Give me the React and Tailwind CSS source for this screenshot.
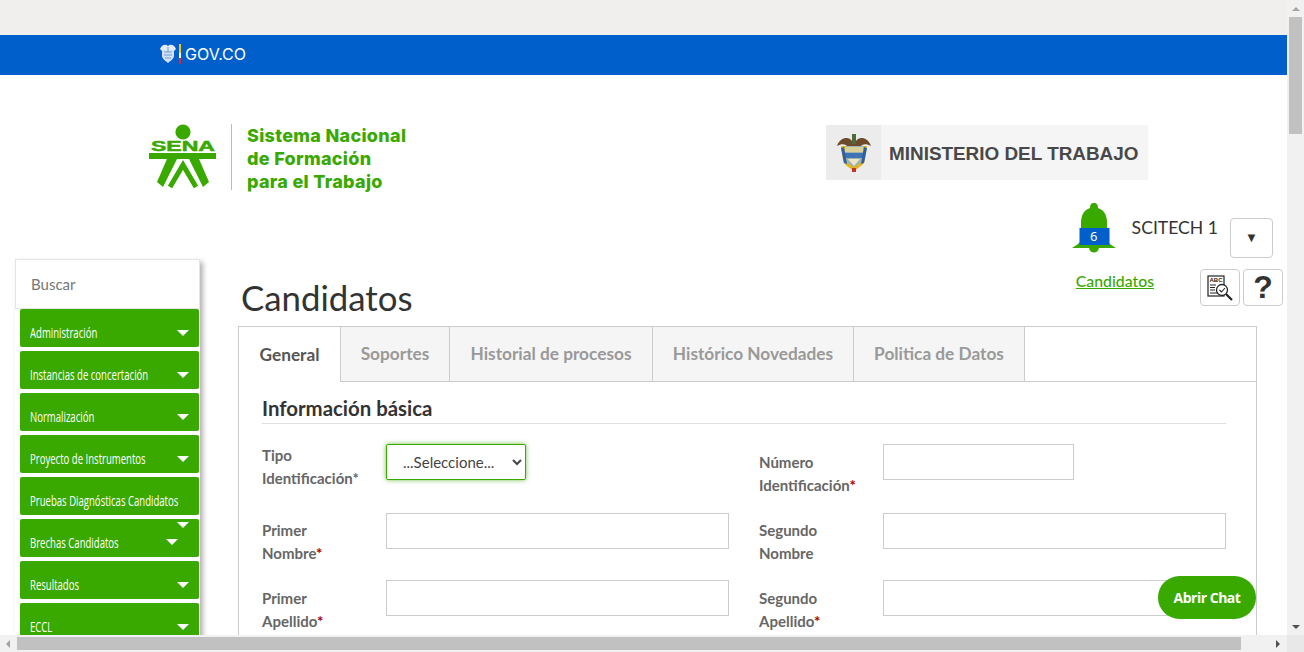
const menu = [
  { label: 'Administración', caret: true },
  { label: 'Instancias de concertación', caret: true },
  { label: 'Normalización', caret: true },
  { label: 'Proyecto de Instrumentos', caret: true },
  { label: 'Pruebas Diagnósticas Candidatos', caret: false },
  { label: 'Brechas Candidatos', caret: true, double: true },
  { label: 'Resultados', caret: true },
  { label: 'ECCL', caret: true },
]

const tabs = [
  { label: 'Soportes', w: 'w-[109px]' },
  { label: 'Historial de procesos', w: 'w-[203px]' },
  { label: 'Histórico Novedades', w: 'w-[201px]' },
  { label: 'Politica de Datos', w: 'w-[172px]' },
]

function Caret() {
  return <span className="block w-0 h-0 border-x-[6px] border-t-[6px] border-x-transparent border-t-white" />
}

function SenaLogo() {
  return (
    <svg width="68" height="66" viewBox="0 0 68 66" className="shrink-0">
      <circle cx="34" cy="8" r="7.6" fill="#39a900" />
      <text x="2" y="27" textLength="64" lengthAdjust="spacingAndGlyphs" fontFamily="Liberation Sans" fontWeight="700" fontSize="14" stroke="#39a900" strokeWidth="0.5" fill="#39a900">SENA</text>
      <rect x="0" y="29" width="67" height="6" fill="#39a900" />
      <polygon points="18,35 28,35 14,63 8,58" fill="#39a900" />
      <polygon points="40,35 50,35 60,58 54,63" fill="#39a900" />
      <path d="M21 63 L34 41 L47 63" fill="none" stroke="#39a900" strokeWidth="5" />
    </svg>
  )
}

function GovShield() {
  return (
    <svg width="16" height="19" viewBox="0 0 16 19" className="shrink-0">
      <path d="M0 5 C2 0 6 0 8 2 C10 0 14 0 16 5 L14 7 L2 7 Z" fill="#e3ebf6" />
      <path d="M2 6 H14 V12 C14 15 10 17 8 19 C6 17 2 15 2 12 Z" fill="#d5e1f1" />
      <path d="M4 8 H12 M4 11 H12 M5 14 H11" stroke="#6d9ddb" strokeWidth="1" />
      <path d="M8 3 V8" stroke="#6d9ddb" strokeWidth="1" />
    </svg>
  )
}

function ColombiaCrest() {
  return (
    <svg width="36" height="40" viewBox="0 0 36 40">
      <path d="M1 13 C4 4 13 3 16 8 L20 8 C23 3 32 4 35 13 C30 10 26 11 24 14 L12 14 C10 11 6 10 1 13 Z" fill="#6d4a2c" />
      <path d="M16 1 h4 v10 h-4 Z" fill="#4c6b3a" />
      <path d="M5 13 H31 L29 27 C28 32 22 35 18 38 C14 35 8 32 7 27 Z" fill="#e2b51f" />
      <path d="M9 13 H27 V25 C27 30 21 32 18 34 C15 32 9 30 9 25 Z" fill="#9fb2b0" />
      <rect x="9" y="14" width="18" height="5" fill="#d8cf9a" />
      <rect x="9" y="20" width="18" height="5" fill="#3f74b3" />
      <path d="M12 26 h12 l-6 7 Z" fill="#e9e6c8" />
      <path d="M5 15 L8 30 L11 31 L8 14 Z M31 15 L28 30 L25 31 L28 14 Z" fill="#2f5fa0" />
      <rect x="16" y="35" width="4" height="4" fill="#c4332c" />
    </svg>
  )
}

function Bell() {
  return (
    <div className="relative w-[44px] h-[50px]">
      <svg width="44" height="50" viewBox="0 0 44 50">
        <path d="M22 0 C25 0 26 2 26 5 C32 7 35 12 35 20 L35 36 C35 40 40 42 44 45 H27 C26 51 18 51 17 45 H0 C4 42 9 40 9 36 L9 20 C9 12 12 7 18 5 C18 2 19 0 22 0 Z" fill="#39a900" />
        <rect x="7.5" y="25" width="30" height="17" fill="#005fca" />
      </svg>
      <span className="absolute left-[7px] top-[25px] w-[30px] text-center text-white text-[13px] leading-[17px] font-['Noto_Sans',sans-serif]">6</span>
    </div>
  )
}

function ReportIcon() {
  return (
    <svg width="26" height="26" viewBox="0 0 26 26">
      <rect x="1" y="1" width="16" height="20" fill="#fff" stroke="#222" strokeWidth="1.2" />
      <text x="2.5" y="7" fontFamily="Liberation Sans" fontWeight="700" fontSize="6" fill="#222">ABC</text>
      <path d="M3 10 H9 M3 12.5 H8 M3 15 H8 M3 18 H12" stroke="#222" strokeWidth="1" />
      <circle cx="15" cy="15" r="5.5" fill="#fff" stroke="#222" strokeWidth="1.3" />
      <path d="M12.5 15 L14.5 17 L18 13" fill="none" stroke="#222" strokeWidth="1.1" />
      <path d="M19 19 L25 25" stroke="#222" strokeWidth="2.2" />
    </svg>
  )
}

function Label({ first, second, required, className = '' }) {
  return (
    <label className={`block w-[124px] text-[15px] leading-[23px] font-bold text-[#666] ${className}`}>
      {first}
      <br />
      {second}
      {required && <span className="text-[#a00]">*</span>}
    </label>
  )
}

function Input({ className = 'w-[343px] h-[36px]' }) {
  return <input className={`${className} border border-[#ccc] bg-white outline-none`} />
}

export default function App() {
  return (
    <div className="relative w-[1304px] h-[652px] overflow-hidden flex flex-col bg-white font-['Lato',sans-serif] text-[#333]">
      <div className="flex h-[635px]">
        <div className="w-[1287px] h-[635px] overflow-hidden">
          {/* Barra superior */}
          <div className="h-[35px] bg-[#f0efee]" />
          <div className="h-[40px] bg-[#005fca] flex items-center pl-[160px] pb-[3px]">
            <GovShield />
            <span className="ml-[3px] w-[2px] h-[20px] flex flex-col">
              <span className="h-[9px] bg-[#f2c811]" />
              <span className="h-[5px] bg-[#fff]" />
              <span className="h-[6px] bg-[#d6263b]" />
            </span>
            <span className="ml-[4px] text-white text-[16px] font-normal font-['Inter',sans-serif]">GOV.CO</span>
          </div>

          {/* Logos */}
          <div className="flex justify-between items-start pt-[49px] pl-[149px] pr-[139px]">
            <div className="flex items-start">
              <SenaLogo />
              <span className="ml-[14px] w-px h-[66px] bg-[#bbb]" />
              <p className="ml-[15px] text-[#39a900] text-[18px] leading-[23px] tracking-[0.3px] font-extrabold font-['Inter',sans-serif]">
                Sistema Nacional
                <br />
                de Formación
                <br />
                para el Trabajo
              </p>
            </div>
            <div className="mt-px w-[322px] h-[55px] flex items-center bg-[#f5f5f5]">
              <div className="w-[55px] h-[55px] bg-[#ececec] flex items-center justify-center">
                <ColombiaCrest />
              </div>
              <span className="ml-[8px] pt-[3px] text-[18.9px] font-bold text-[#484848] font-['Liberation_Sans',sans-serif]">MINISTERIO DEL TRABAJO</span>
            </div>
          </div>

          {/* Usuario */}
          <div className="mt-[10px] h-[56px] flex justify-end items-start pr-[14px]">
            <Bell />
            <span className="ml-[16px] mt-[13px] text-[17.6px] leading-[24px] text-[#333]">SCITECH 1</span>
            <button className="ml-[12px] mt-[15px] w-[43px] h-[40px] border border-[#ccc] rounded-[4px] text-[13px] text-[#333]">▼</button>
          </div>

          <div className="flex items-start">
            {/* Menu lateral */}
            <aside className="ml-[15px] w-[185px] shadow-[3px_3px_5px_rgba(0,0,0,0.3)] shrink-0">
              <div className="h-[50px] border border-[#e5e5e5] pl-[15px] flex items-center text-[15px] text-[#777]">Buscar</div>
              <div className="pl-[5px] pr-px flex flex-col gap-[4px]">
                {menu.map((item) => (
                  <div key={item.label} className="h-[38px] bg-[#39a900] rounded-[2px] pl-[10px] pr-[10px] flex items-center text-white text-[14.5px] font-['Open_Sans',sans-serif]">
                    <span className="block flex-1 min-w-0 pt-[10px] whitespace-nowrap origin-left scale-x-[0.66]">{item.label}</span>
                    {item.double ? (
                      <span className="flex items-start h-full shrink-0">
                        <span className="mt-[20px] mr-[-1px]">
                          <Caret />
                        </span>
                        <span className="mt-[3px]">
                          <Caret />
                        </span>
                      </span>
                    ) : (
                      item.caret && (
                        <span className="pt-[9px] shrink-0">
                          <Caret />
                        </span>
                      )
                    )}
                  </div>
                ))}
              </div>
            </aside>

            {/* Contenido */}
            <main className="ml-[38px] w-[1045px] shrink-0">
              <div className="h-[67px] flex justify-between items-start">
                <h1 className="mt-[19px] ml-[3px] text-[34.8px] leading-[40px] text-[#333]">Candidatos</h1>
                <div className="flex items-start">
                  <a className="mt-[12px] text-[15.8px] leading-[20px] font-medium text-[#39a900] underline">Candidatos</a>
                  <button className="ml-[46px] mt-[10px] w-[40px] h-[37px] border border-[#ccc] rounded-[4px] flex items-center justify-center">
                    <ReportIcon />
                  </button>
                  <button className="ml-[3px] mt-[10px] w-[40px] h-[37px] border border-[#ccc] rounded-[4px] text-[32px] leading-[35px] font-bold text-[#333] font-['Liberation_Sans',sans-serif]">?</button>
                </div>
              </div>

              <div className="w-[1019px] h-[400px] border border-[#ccc]">
                <div className="flex h-[55px] border-b border-[#ccc]">
                  <div className="w-[101px] h-[55px] bg-white flex items-center justify-center text-[17.25px] font-bold text-[#555]">General</div>
                  {tabs.map((t) => (
                    <div key={t.label} className={`${t.w} h-[55px] bg-[#f5f5f5] border-l border-b border-[#ccc] flex items-center justify-center text-[17.25px] font-bold text-[#999] last:border-r`}>
                      {t.label}
                    </div>
                  ))}
                </div>

                <div className="pl-[23px] pr-[30px]">
                  <h2 className="mt-[14px] pb-[3px] h-[28px] border-b border-[#e0e0e0] text-[20.4px] leading-[24px] font-bold text-[#333]">Información básica</h2>

                  <div className="mt-[20px] grid grid-cols-[497px_1fr] gap-y-[15px]">
                    <div className="flex">
                      <Label first="Tipo" second="Identificación*" />
                      <select className="w-[140px] h-[36px] pl-[12px] border border-[#39a900] rounded-[2px] shadow-[0_0_5px_rgba(57,169,0,0.7)] bg-white text-[15px] text-[#444] outline-none">
                        <option>...Seleccione...</option>
                      </select>
                    </div>
                    <div className="flex">
                      <Label first="Número" second="Identificación" required className="mt-[7px] mb-[1px]" />
                      <Input className="w-[191px] h-[36px]" />
                    </div>
                    <div className="flex">
                      <Label first="Primer" second="Nombre" required className="mt-[6px]" />
                      <Input />
                    </div>
                    <div className="flex">
                      <Label first="Segundo" second="Nombre" className="mt-[6px]" />
                      <Input />
                    </div>
                    <div className="flex">
                      <Label first="Primer" second="Apellido" required className="mt-[7px]" />
                      <Input />
                    </div>
                    <div className="flex">
                      <Label first="Segundo" second="Apellido" required className="mt-[7px]" />
                      <Input />
                    </div>
                  </div>
                </div>
              </div>
            </main>
          </div>
        </div>

        {/* Scroll vertical */}
        <div className="w-[17px] h-[635px] bg-[#f1f1f1] flex flex-col items-center justify-between">
          <div className="w-full flex flex-col items-center">
            <span className="mt-[7px] w-0 h-0 border-x-[4px] border-b-[4px] border-x-transparent border-b-[#a3a3a3]" />
            <span className="mt-[6px] w-[13px] h-[117px] bg-[#c1c1c1]" />
          </div>
          <span className="mb-[6px] w-0 h-0 border-x-[4px] border-t-[4px] border-x-transparent border-t-[#505050]" />
        </div>
      </div>

      {/* Scroll horizontal */}
      <div className="h-[17px] bg-[#f1f1f1] flex items-center">
        <span className="ml-[6px] w-0 h-0 border-y-[4px] border-r-[4px] border-y-transparent border-r-[#a3a3a3]" />
        <span className="ml-[7px] w-[1224px] h-[13px] bg-[#c1c1c1]" />
        <span className="ml-[35px] w-0 h-0 border-y-[4px] border-l-[4px] border-y-transparent border-l-[#505050]" />
        <span className="ml-[7px] w-[17px] h-[17px] bg-[#e8e8e8]" />
      </div>

      <button className="absolute left-[1158px] top-[576px] w-[98px] h-[43px] rounded-full bg-[#39a900] text-white text-[14px] font-bold font-['Open_Sans',sans-serif] tracking-[-0.5px]">Abrir Chat</button>
    </div>
  )
}
